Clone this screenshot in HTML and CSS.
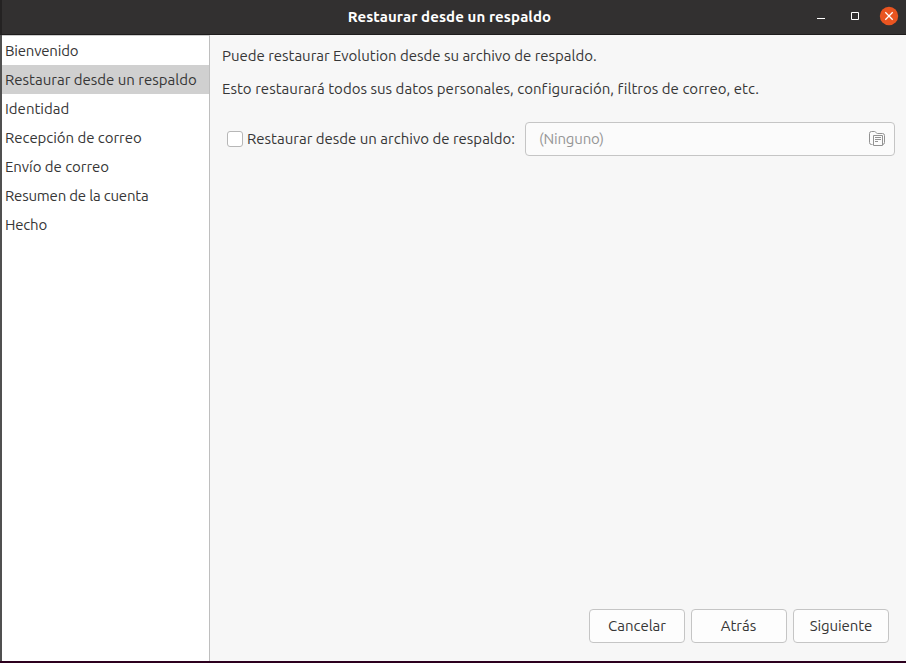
FILE: index.html
```html
<!DOCTYPE html>
<html lang="es">
<head>
<meta charset="utf-8">
<title>Restaurar desde un respaldo</title>
<link rel="stylesheet" href="styles.css">
</head>
<body>
<div class="window">
  <header class="titlebar">
    <h1 class="title">Restaurar desde un respaldo</h1>
    <div class="controls">
      <svg class="control" width="18" height="18" viewBox="0 0 18 18"><path d="M5 11.5h8" stroke="#fff"/></svg>
      <svg class="control" width="18" height="18" viewBox="0 0 18 18"><path d="M5.500 5.500h7v7h-7z" fill="none" stroke="#fff"/></svg>
      <svg class="control" width="18" height="18" viewBox="0 0 18 18"><circle cx="9" cy="9" r="9.2" fill="#e95420"/><path d="M5.300 5.300l7.400 7.400M12.700 5.300l-7.400 7.400" stroke="#fff" stroke-width="1.3"/></svg>
    </div>
  </header>
  <div class="body">
    <ul class="sidebar">
      <li class="step tight">Bienvenido</li>
      <li class="step selected">Restaurar desde un respaldo</li>
      <li class="step">Identidad</li>
      <li class="step snug">Recepción de correo</li>
      <li class="step snug">Envío de correo</li>
      <li class="step tight">Resumen de la cuenta</li>
      <li class="step tight">Hecho</li>
    </ul>
    <main class="page">
      <p class="text intro">Puede restaurar Evolution desde su archivo de respaldo.</p>
      <p class="text detail">Esto restaurará todos sus datos personales, configuración, filtros de correo, etc.</p>
      <div class="restore">
        <span class="checkbox"></span>
        <span class="label">Restaurar desde un archivo de respaldo:</span>
        <div class="chooser">
          <span class="value tight">(Ninguno)</span>
          <svg width="16" height="16" viewBox="0 0 16 16" fill="none" stroke="#929292"><path d="M3.500 13.500h-1q-2 0-2-2v-9q0-2 2-2h3q1 0 1.500 1t1.500 1h5q2 0 2 2v7q0 2-2 2"/><path d="M4.500 4.500h9v10h-9z"/><path d="M6 6.500h6M6 8.500h6M6 10.500h3"/></svg>
        </div>
      </div>
      <footer class="actions">
        <button class="button cancel">Cancelar</button>
        <button class="button back">Atrás</button>
        <button class="button next">Siguiente</button>
      </footer>
    </main>
  </div>
</div>
</body>
</html>
```
FILE: styles.css
```css
* { box-sizing: border-box; }
body {
  margin: 0;
  color: #363636;
  font: 15px/20px Ubuntu, "Noto Sans", sans-serif;
  white-space: nowrap;
}
.window {
  display: flex;
  flex-direction: column;
  height: 663px;
  border-bottom: 2px solid #2c001e;
  overflow: hidden;
}
.titlebar {
  display: grid;
  grid-template-columns: 1fr auto 1fr;
  height: 35px;
  background: #323030;
  border-bottom: 1px solid #1e1c1c;
  border-left: 2px solid #242222;
}
.title {
  grid-column: 2;
  margin: 7px 0 0 -9px;
  color: #fff;
  font-size: 15px;
  line-height: 20px;
  letter-spacing: 0.1px;
}
.controls {
  display: flex;
  justify-content: flex-end;
  gap: 16px;
  padding: 7px 8px 0 0;
}
.control { overflow: visible; }
.body {
  display: flex;
  flex: 1;
  min-height: 0;
  border-left: 2px solid #505050;
}
.sidebar {
  width: 208px;
  margin: 0;
  padding: 0;
  list-style: none;
  background: #fff;
  border-top: 1px solid #cdcdcd;
  border-right: 1px solid #bebebe;
}
.step {
  height: 29px;
  padding-left: 3px;
  line-height: 30px;
}
.tight { letter-spacing: -0.2px; }
.snug { letter-spacing: -0.05px; }
.selected { background: #d0d0d0; }
.page {
  display: flex;
  flex: 1;
  flex-direction: column;
  padding: 11px 11px 18px;
  background: #f7f7f7;
}
.text { margin: 0 0 13px 1px; }
.intro { letter-spacing: -0.02px; }
.detail { letter-spacing: 0.025px; }
.restore {
  display: flex;
  align-items: center;
  height: 34px;
  margin: 10px 0 0 6px;
}
.checkbox {
  width: 16px;
  height: 16px;
  margin-right: 4px;
  background: #fff;
  border: 1px solid #b7b7b7;
  border-radius: 3px;
}
.label { width: 278px; }
.chooser {
  display: flex;
  flex: 1;
  align-items: center;
  justify-content: space-between;
  height: 34px;
  padding: 0 9px 0 13px;
  color: #969696;
  background: #fbfbfb;
  border: 1px solid #c5c5c5;
  border-radius: 4px;
}
.actions {
  display: flex;
  justify-content: flex-end;
  gap: 6px;
  margin: auto 6px 0 0;
}
.button {
  width: 96px;
  height: 34px;
  padding: 0;
  color: inherit;
  font: inherit;
  background: #fdfdfd;
  border: 1px solid #c5c5c5;
  border-radius: 4px;
}
.back { padding-right: 1px; }
.next { letter-spacing: -0.1px; }
```
